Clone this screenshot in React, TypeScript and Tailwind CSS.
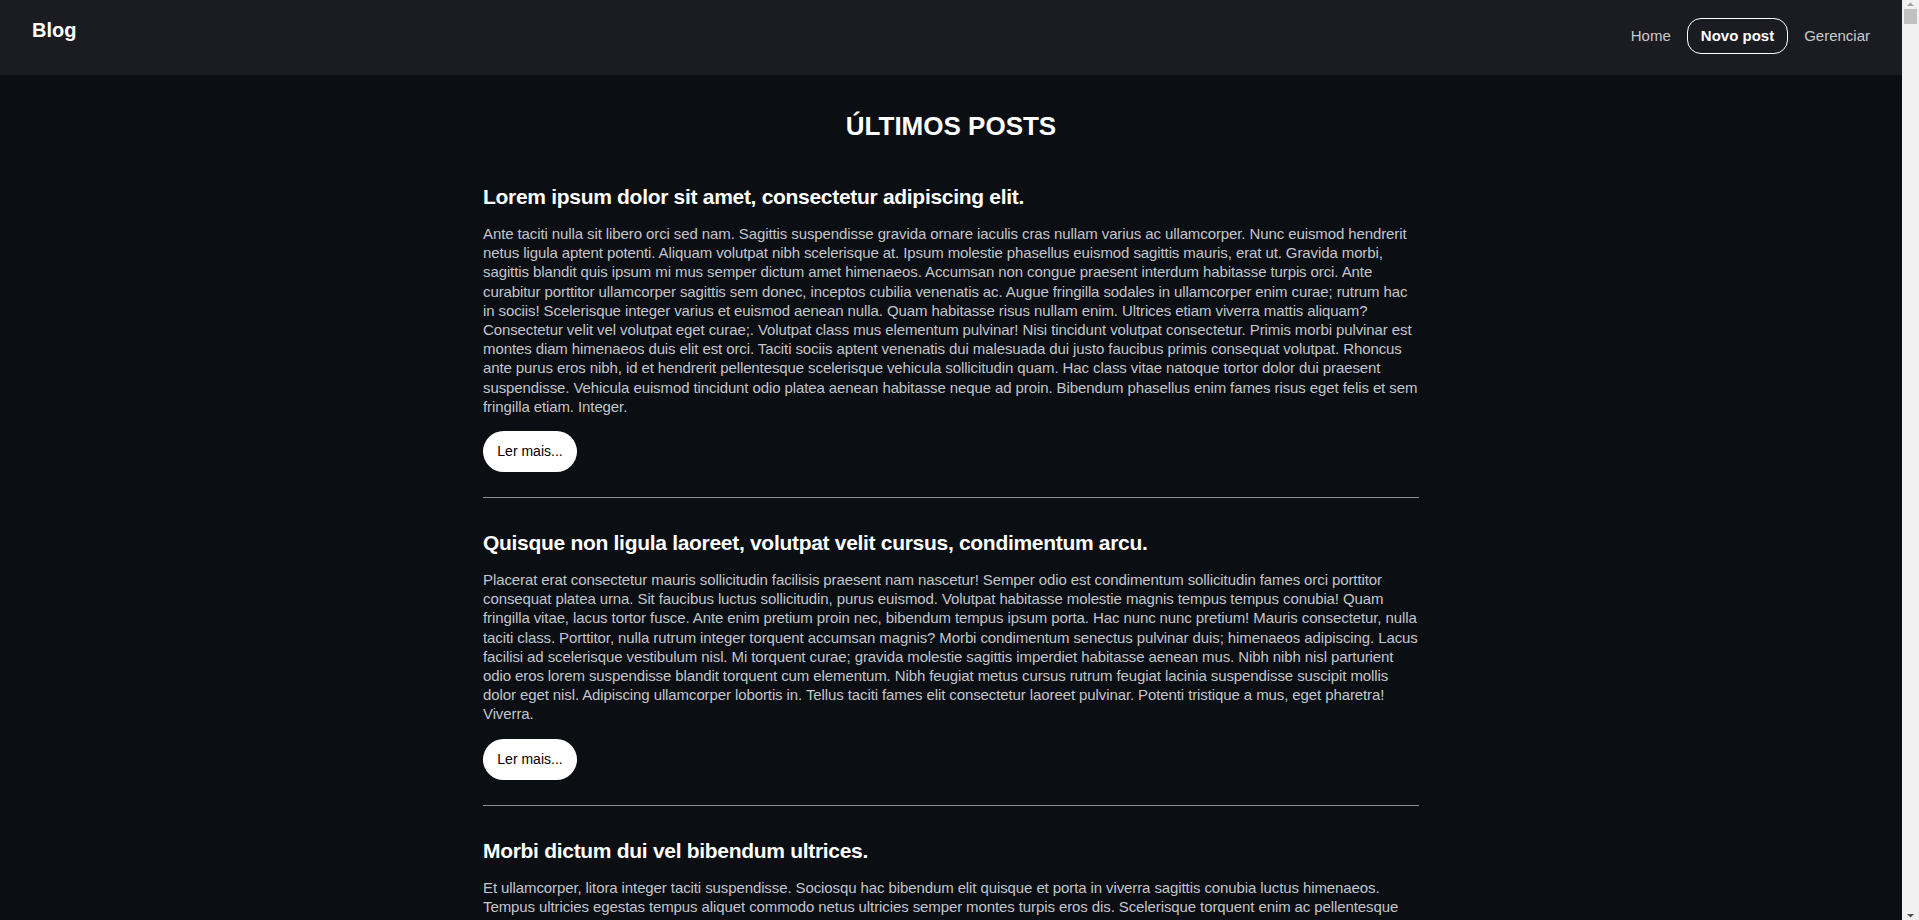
import React from "react";

type Post = { title: string; body: string };

const posts: Post[] = [
  {
    title: "Lorem ipsum dolor sit amet, consectetur adipiscing elit.",
    body: "Ante taciti nulla sit libero orci sed nam. Sagittis suspendisse gravida ornare iaculis cras nullam varius ac ullamcorper. Nunc euismod hendrerit netus ligula aptent potenti. Aliquam volutpat nibh scelerisque at. Ipsum molestie phasellus euismod sagittis mauris, erat ut. Gravida morbi, sagittis blandit quis ipsum mi mus semper dictum amet himenaeos. Accumsan non congue praesent interdum habitasse turpis orci. Ante curabitur porttitor ullamcorper sagittis sem donec, inceptos cubilia venenatis ac. Augue fringilla sodales in ullamcorper enim curae; rutrum hac in sociis! Scelerisque integer varius et euismod aenean nulla. Quam habitasse risus nullam enim. Ultrices etiam viverra mattis aliquam? Consectetur velit vel volutpat eget curae;. Volutpat class mus elementum pulvinar! Nisi tincidunt volutpat consectetur. Primis morbi pulvinar est montes diam himenaeos duis elit est orci. Taciti sociis aptent venenatis dui malesuada dui justo faucibus primis consequat volutpat. Rhoncus ante purus eros nibh, id et hendrerit pellentesque scelerisque vehicula sollicitudin quam. Hac class vitae natoque tortor dolor dui praesent suspendisse. Vehicula euismod tincidunt odio platea aenean habitasse neque ad proin. Bibendum phasellus enim fames risus eget felis et sem fringilla etiam. Integer.",
  },
  {
    title: "Quisque non ligula laoreet, volutpat velit cursus, condimentum arcu.",
    body: "Placerat erat consectetur mauris sollicitudin facilisis praesent nam nascetur! Semper odio est condimentum sollicitudin fames orci porttitor consequat platea urna. Sit faucibus luctus sollicitudin, purus euismod. Volutpat habitasse molestie magnis tempus tempus conubia! Quam fringilla vitae, lacus tortor fusce. Ante enim pretium proin nec, bibendum tempus ipsum porta. Hac nunc nunc pretium! Mauris consectetur, nulla taciti class. Porttitor, nulla rutrum integer torquent accumsan magnis? Morbi condimentum senectus pulvinar duis; himenaeos adipiscing. Lacus facilisi ad scelerisque vestibulum nisl. Mi torquent curae; gravida molestie sagittis imperdiet habitasse aenean mus. Nibh nibh nisl parturient odio eros lorem suspendisse blandit torquent cum elementum. Nibh feugiat metus cursus rutrum feugiat lacinia suspendisse suscipit mollis dolor eget nisl. Adipiscing ullamcorper lobortis in. Tellus taciti fames elit consectetur laoreet pulvinar. Potenti tristique a mus, eget pharetra! Viverra.",
  },
  {
    title: "Morbi dictum dui vel bibendum ultrices.",
    body: "Et ullamcorper, litora integer taciti suspendisse. Sociosqu hac bibendum elit quisque et porta in viverra sagittis conubia luctus himenaeos. Tempus ultricies egestas tempus aliquet commodo netus ultricies semper montes turpis eros dis. Scelerisque torquent enim ac pellentesque primis nisi sollicitudin; dictum mollis. Tortor cras placerat vehicula nam maecenas fringilla. Mattis nullam vulputate facilisis ultrices sapien dapibus cursus ad. Donec fermentum magna arcu neque, dignissim ultrices. Nascetur diam metus hac sem penatibus lobortis ridiculus velit. Quis ante proin sociosqu imperdiet vitae ornare.",
  },
  {
    title: "Vestibulum ante ipsum primis in faucibus orci luctus.",
    body: "Fusce lacinia, nisi a pretium aliquet, augue elit ultrices nibh, et fringilla lectus arcu nec nunc. Curabitur condimentum tellus a tempus mattis. Pellentesque habitant morbi tristique senectus et netus et malesuada fames ac turpis egestas. Integer posuere erat a ante venenatis dapibus posuere velit aliquet. Cras justo odio, dapibus ac facilisis in, egestas eget quam. Nullam quis risus eget urna mollis ornare vel eu leo.",
  },
];

const Navbar = () => {
  return (
    <header className="h-[75px] bg-[#1b1c21] flex items-start justify-between px-8 pt-[18px]">
      <a href="#" className="text-[20px] leading-[24px] font-bold text-white">
        Blog
      </a>
      <nav className="flex items-center gap-4 text-[15px]">
        <a href="#" className="text-[#c9cacd]">
          Home
        </a>
        <a
          href="#"
          className="h-[36px] px-[13px] flex items-center border border-white rounded-[14px] text-white font-bold"
        >
          Novo post
        </a>
        <a href="#" className="text-[#c9cacd]">
          Gerenciar
        </a>
      </nav>
    </header>
  );
};

const PostItem = ({ post, last }: { post: Post; last: boolean }) => {
  return (
    <article className="pt-[33px] first:pt-0">
      <h2 className="text-[21px] leading-[24px] font-bold text-white tracking-[-0.3px]">{post.title}</h2>
      <p className="mt-[15px] text-[15px] leading-[19.2px] text-[#c3c6cc] tracking-[-0.1px]">{post.body}</p>
      <button className="mt-[15px] h-[41px] w-[94px] rounded-full bg-white text-black text-[14px]">
        Ler mais...
      </button>
      {!last && <hr className="mt-[25px] border-t border-[#8d8d8d]" />}
    </article>
  );
};

// window scrollbar strip, drawn since the headless page hides it
const Scrollbar = () => {
  return (
    <aside className="w-[17px] shrink-0 bg-[#f1f1f1] flex flex-col items-center">
      <svg width="17" height="9" viewBox="0 0 17 9" className="shrink-0">
        <path d="M5 6h7L8.5 2.5z" fill="#a3a3a3" />
      </svg>
      <div className="w-[13px] h-[15px] bg-[#c1c1c1]" />
      <div className="flex-1" />
      <svg width="17" height="9" viewBox="0 0 17 9" className="shrink-0">
        <path d="M5 3h7L8.5 6.5z" fill="#505050" />
      </svg>
    </aside>
  );
};

export default function App() {
  return (
    <div className="h-screen flex bg-[#0b0e13] font-['Liberation_Sans',Arial,sans-serif]">
      <div className="flex-1 overflow-y-auto [scrollbar-width:none]">
        <Navbar />
        <main className="w-[936px] mx-auto pt-[36px] pb-16">
          <h1 className="text-[26px] leading-[31px] font-bold text-white text-center mb-[43px]">ÚLTIMOS POSTS</h1>
          <div>
            {posts.map((post, i) => (
              <PostItem key={i} post={post} last={i === posts.length - 1} />
            ))}
          </div>
        </main>
      </div>
      <Scrollbar />
    </div>
  );
}
